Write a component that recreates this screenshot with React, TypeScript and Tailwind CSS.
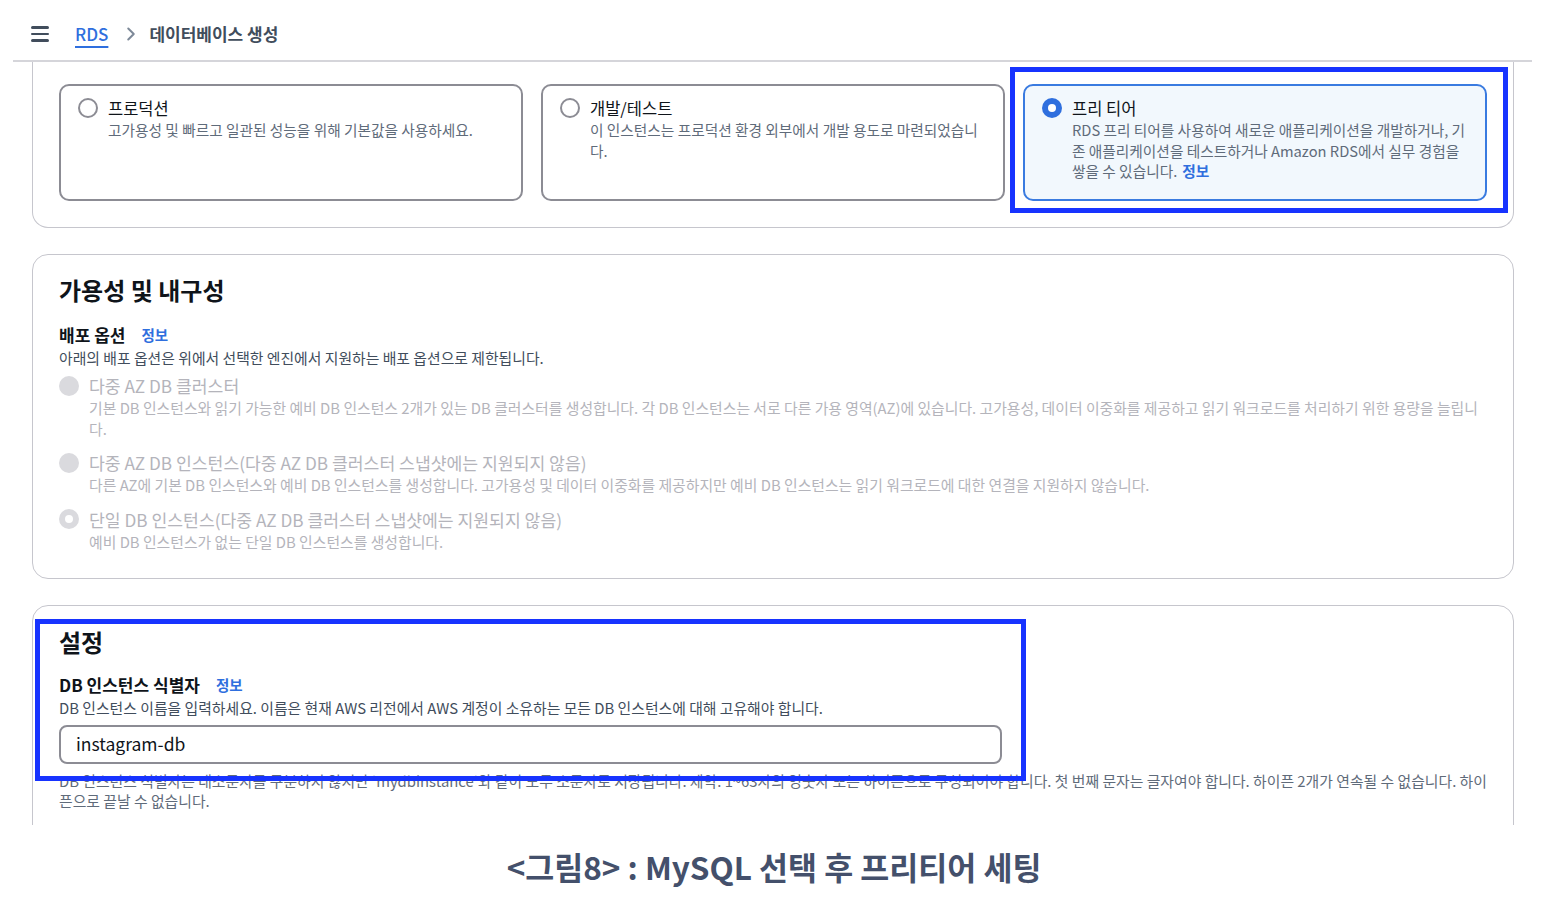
import { ChevronRight } from "lucide-react";

const FONT = { fontFamily: '"Noto Sans CJK KR", "Noto Sans", sans-serif' };

const TIERS = [
  {
    title: "프로덕션",
    desc: "고가용성 및 빠르고 일관된 성능을 위해 기본값을 사용하세요.",
    selected: false,
  },
  {
    title: "개발/테스트",
    desc: "이 인스턴스는 프로덕션 환경 외부에서 개발 용도로 마련되었습니다.",
    selected: false,
  },
  {
    title: "프리 티어",
    desc: "RDS 프리 티어를 사용하여 새로운 애플리케이션을 개발하거나, 기존 애플리케이션을 테스트하거나 Amazon RDS에서 실무 경험을 쌓을 수 있습니다.",
    selected: true,
  },
];

const DEPLOY = [
  {
    label: "다중 AZ DB 클러스터",
    desc: "기본 DB 인스턴스와 읽기 가능한 예비 DB 인스턴스 2개가 있는 DB 클러스터를 생성합니다. 각 DB 인스턴스는 서로 다른 가용 영역(AZ)에 있습니다. 고가용성, 데이터 이중화를 제공하고 읽기 워크로드를 처리하기 위한 용량을 늘립니다.",
    checked: false,
  },
  {
    label: "다중 AZ DB 인스턴스(다중 AZ DB 클러스터 스냅샷에는 지원되지 않음)",
    desc: "다른 AZ에 기본 DB 인스턴스와 예비 DB 인스턴스를 생성합니다. 고가용성 및 데이터 이중화를 제공하지만 예비 DB 인스턴스는 읽기 워크로드에 대한 연결을 지원하지 않습니다.",
    checked: false,
  },
  {
    label: "단일 DB 인스턴스(다중 AZ DB 클러스터 스냅샷에는 지원되지 않음)",
    desc: "예비 DB 인스턴스가 없는 단일 DB 인스턴스를 생성합니다.",
    checked: true,
  },
];

function Radio({ selected }: { selected: boolean }) {
  if (selected) {
    return (
      <span className="mt-[2px] flex h-[20px] w-[20px] shrink-0 items-center justify-center rounded-full bg-[#2f6fde]">
        <span className="h-[8px] w-[8px] rounded-full bg-white" />
      </span>
    );
  }
  return <span className="mt-[2px] h-[20px] w-[20px] shrink-0 rounded-full border-2 border-[#8c8c94] bg-white" />;
}

function Info() {
  return <span className="ml-[16px] text-[14.5px] font-semibold text-[#2f6fde]">정보</span>;
}

export default function App() {
  return (
    <div className="relative h-[910px] w-full overflow-hidden bg-white" style={FONT}>
      {/* screenshot frame */}
      <div className="relative ml-[13px] h-[825px] w-[1519px] overflow-hidden">
        <header className="flex h-[62px] items-center border-b-2 border-[#d5d5da] pl-[18px] pt-[8px]">
          <span className="flex w-[18px] flex-col gap-[4px]">
            <span className="h-[2.5px] rounded bg-[#414d5c]" />
            <span className="h-[2.5px] rounded bg-[#414d5c]" />
            <span className="h-[2.5px] rounded bg-[#414d5c]" />
          </span>
          <span className="ml-[26px] text-[17px] font-medium text-[#2f6fde] underline decoration-[1.5px] underline-offset-[5px]">RDS</span>
          <ChevronRight className="ml-[12px] h-[22px] w-[22px] text-[#7d8998]" strokeWidth={2.2} />
          <span className="ml-[7px] text-[17px] font-semibold text-[#414d5c]">데이터베이스 생성</span>
        </header>

        <div className="px-[19px] pr-[18px]">
          {/* engine tier panel, top cut off */}
          <div className="rounded-b-[16px] border-x border-b border-[#c6c6cd] px-[26px] pb-[26px] pt-[22px]">
            <div className="grid grid-cols-3 gap-[18px]">
              {TIERS.map((t) => (
                <div
                  key={t.title}
                  className={`flex h-[117px] gap-[10px] rounded-[10px] border-2 pl-[17px] pr-[18px] pt-[10px] ${
                    t.selected ? "border-[#3a7be0] bg-[#f2f8fd]" : "border-[#8c8c94] bg-white"
                  }`}
                >
                  <Radio selected={t.selected} />
                  <div>
                    <div className="text-[16.5px] leading-[24px] text-[#0f141a]">{t.title}</div>
                    <p className="text-[14.7px] leading-[20.5px] text-[#5f6b7a]">
                      {t.desc}
                      {t.selected && <span className="ml-[5px] font-semibold text-[#2f6fde]">정보</span>}
                    </p>
                  </div>
                </div>
              ))}
            </div>
          </div>

          {/* availability panel */}
          <section className="mt-[26px] h-[325px] rounded-[16px] border border-[#c6c6cd] px-[26px] pt-[18px]">
            <h2 className="text-[24px] font-bold leading-[34px] text-[#0f141a]">가용성 및 내구성</h2>
            <div className="mt-[17px] flex items-center">
              <span className="text-[17px] font-bold leading-[22px] text-[#0f141a]">배포 옵션</span>
              <Info />
            </div>
            <p className="text-[14.85px] leading-[24px] text-[#414d5c]">아래의 배포 옵션은 위에서 선택한 엔진에서 지원하는 배포 옵션으로 제한됩니다.</p>
            <div className="mt-[3px] flex flex-col gap-[11px]">
              {DEPLOY.map((d) => (
                <div key={d.label} className="flex gap-[10px]">
                  {d.checked ? (
                    <span className="mt-[2.5px] flex h-[20px] w-[20px] shrink-0 items-center justify-center rounded-full bg-[#dadade]">
                      <span className="h-[8px] w-[8px] rounded-full bg-white" />
                    </span>
                  ) : (
                    <span className="mt-[2.5px] h-[20px] w-[20px] shrink-0 rounded-full bg-[#dadade]" />
                  )}
                  <div>
                    <div className="text-[17.2px] leading-[25px] text-[#b4b4bb]">{d.label}</div>
                    <p className="text-[14.85px] leading-[20.5px] text-[#b4b4bb]">{d.desc}</p>
                  </div>
                </div>
              ))}
            </div>
          </section>

          {/* settings panel */}
          <section className="mt-[26px] h-[300px] rounded-[16px] border border-[#c6c6cd] px-[26px] pt-[19px]">
            <h2 className="text-[24px] font-bold leading-[34px] text-[#0f141a]">설정</h2>
            <div className="mt-[15px] flex items-center">
              <span className="text-[17px] font-bold leading-[22px] text-[#0f141a]">DB 인스턴스 식별자</span>
              <Info />
            </div>
            <p className="text-[14.85px] leading-[24px] text-[#414d5c]">
              DB 인스턴스 이름을 입력하세요. 이름은 현재 AWS 리전에서 AWS 계정이 소유하는 모든 DB 인스턴스에 대해 고유해야 합니다.
            </p>
            <div className="mt-[5px] flex h-[39px] w-[943px] items-center rounded-[8px] border-2 border-[#8c8c94] px-[15px] text-[17.5px] text-[#0f141a]">
              instagram-db
            </div>
            <p className="mt-[7px] text-[14.85px] leading-[20px] text-[#5f6b7a]">
              DB 인스턴스 식별자는 대소문자를 구분하지 않지만 'mydbinstance'와 같이 모두 소문자로 저장됩니다. 제약: 1~63자의 영숫자 또는 하이픈으로 구성되어야 합니다. 첫 번째 문자는 글자여야 합니다. 하이픈 2개가 연속될 수 없습니다. 하이픈으로 끝날 수 없습니다.
            </p>
          </section>
        </div>

        {/* annotation boxes */}
        <div className="pointer-events-none absolute left-[997px] top-[67px] h-[146px] w-[498px] border-[5px] border-[#1733ff]" />
        <div className="pointer-events-none absolute left-[22px] top-[619px] h-[162px] w-[991px] border-[5px] border-[#1733ff]" />
      </div>

      <p className="mt-[18px] pr-[4px] text-center text-[31.5px] font-bold text-[#44506b]">&lt;그림8&gt; : MySQL 선택 후 프리티어 세팅</p>
    </div>
  );
}
